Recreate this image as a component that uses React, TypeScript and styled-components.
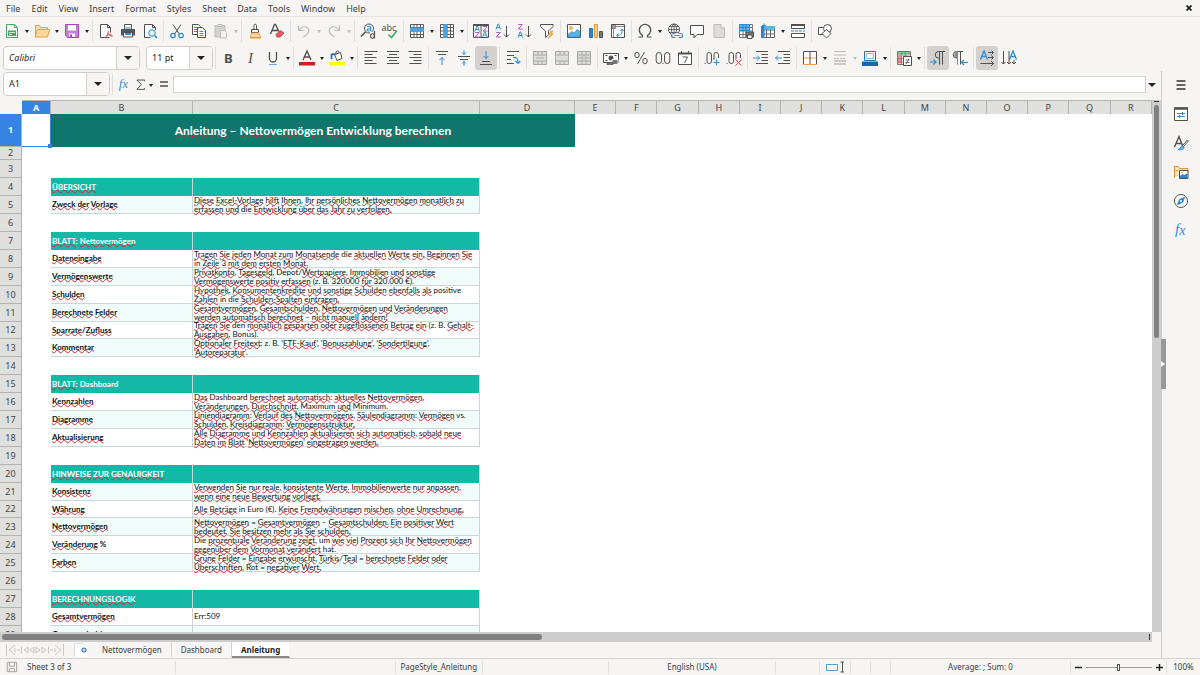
import React, { Fragment, ReactNode } from "react";
import styled, { createGlobalStyle, css } from "styled-components";

const c = {
  chrome: "#f6f5f4",
  line: "#d5d3d0",
  ink: "#3d3d3d",
  icon: "#505050",
  blue: "#2f8fd3",
  accent: "#3584e4",
  faint: "#bcbcba",
  teal: "#14b8a6",
  tealDark: "#0f766e",
  tint: "#f0fdfa",
  header: "#dfdfdd",
  headerLine: "#b3b3b0",
};

const ui = `"Noto Sans", "Open Sans", sans-serif`;
const cellFont = `Lato, "Open Sans", sans-serif`;

const Global = createGlobalStyle`
  *, *::before, *::after { box-sizing: border-box; }
  html, body { margin: 0; }
  body { background: ${c.chrome}; color: ${c.ink}; font: 9px/12px ${ui}; overflow: hidden; }
  button, input { font: inherit; color: inherit; margin: 0; padding: 0; border: 0; background: none; }
  svg { display: block; flex: none; }
`;

/* ---------- icons ---------- */

const K = c.icon;
const B = c.blue;
const F = c.faint;
const P = "#b357c4";

const lines = (rows: [number, number, number][], stroke = K) => (
  <path d={rows.map(([x, y, w]) => `M${x} ${y}h${w}`).join("")} stroke={stroke} />
);
const tableGrid = (stroke: string) => (
  <path d="M1.5 1.5h13v13h-13zM1.5 4.5h13M1.5 8h13M1.5 11.5h13M5 1.5v13M8 1.5v13M11.5 1.5v13" fill="#fff" stroke={stroke} />
);
const letter = (ch: string, x: number, y: number, size: number, fill: string, bold = false) => (
  <text x={x} y={y} fontSize={size} fill={fill} stroke="none" fontFamily={ui} fontWeight={bold ? 700 : 400}>
    {ch}
  </text>
);
/* small sort marks: a peak with a bar, and a zigzag */
const peak = (x: number, y: number) => (
  <path d={`M${x} ${y + 5.5}l2-5.500h.6l2 5.500M${x + 0.8} ${y + 3.5}h3`} stroke={B} />
);
const zigzag = (x: number, y: number) => <path d={`M${x} ${y + 0.5}h4l-4 4.500h4.500`} stroke={P} />;
const fxGlyph = (
  <text x={2} y={12} fontSize={15} fill={B} stroke="none" fontStyle="italic" fontFamily={`"Liberation Serif", serif`}>
    f<tspan fontSize={14} dy={1}>x</tspan>
  </text>
);

const icons: Record<string, ReactNode> = {
  new: (
    <>
      <path d="M2.5 1.5h8l3 3v10h-11z" fill="#fff" stroke="#3fa866" />
      <path d="M10.5 1.5v3h3" stroke="#3fa866" />
      <path d="M4 7.5h8V13H4z" fill="#3fa866" stroke="none" />
      <path d="M5 9.5h6M5 11.5h3" stroke="#fff" strokeWidth={0.8} />
    </>
  ),
  open: (
    <>
      <path d="M1.5 13.5v-11h4l1 2h7v2" fill="#fbe0b0" stroke="#e2a04a" />
      <path d="M1 14l2.5-7.5H15.7L13.5 14z" fill="#fcd79a" stroke="#e2a04a" />
    </>
  ),
  save: (
    <>
      <path d="M1.5 1.5h13v13h-11l-2-2z" fill="#c583d2" stroke="#a646b8" />
      <path d="M4 2h8v5.5H4zM5 10.5h6V14H5z" fill="#fff" stroke="none" />
      <path d="M6 11.5h2V14H6z" fill="#a646b8" stroke="none" />
    </>
  ),
  pdf: (
    <>
      <path d="M11.5 14.5h-9v-13h7l3 3v5" fill="#fff" stroke={K} />
      <path d="M9.5 1.5v3h3" stroke={K} />
      <path d="M7.5 14c2-1.5 3-3.5 2.7-6M10 10c.8 2 2.400 3 4.700 3.300M8.200 13c1.500-1 3.500-1.600 6-1" stroke="#e04a4a" />
    </>
  ),
  print: (
    <>
      <path d="M4.5 6V1.500h7V6" fill="#fff" stroke={K} />
      <path d="M1 6h14v6.500H1z" fill="#555" stroke="none" />
      <path d="M3.5 9.5h9V14h-9z" fill="#fff" stroke={K} />
      <path d="M4 5h8" stroke={B} />
      <path d="M5 11h6" stroke={B} strokeWidth={2} />
    </>
  ),
  preview: (
    <>
      <path d="M13.5 7V4.500l-3-3h-8v13h6" fill="#fff" stroke={K} />
      <path d="M10.5 1.5v3h3" stroke={K} />
      <circle cx={10} cy={10} r={3.3} fill="#dff0fa" stroke={B} />
      <path d="M12.3 12.3L15 15" stroke={B} strokeWidth={1.5} />
    </>
  ),
  cut: (
    <>
      <path d="M4 1.5l6.300 9.500M12 1.5L5.700 11" stroke={K} />
      <circle cx={4} cy={12.5} r={2.2} stroke={B} strokeWidth={1.3} />
      <circle cx={12} cy={12.5} r={2.2} stroke={B} strokeWidth={1.3} />
    </>
  ),
  copy: (
    <>
      <path d="M1.5 1.5h6l2 2v8h-8z" fill="#fff" stroke={K} />
      <path d="M3 4.5h4M3 6.5h4M3 8.5h4" stroke={B} />
      <path d="M6.5 4.5h5l3 3v7h-8z" fill="#fff" stroke={K} />
      <path d="M8.5 8.5h4M8.5 10.5h4M8.5 12.5h4" stroke={B} />
    </>
  ),
  paste: (
    <>
      <path d="M2 2.5h10V14H2z" fill="#d4d4d2" stroke={F} />
      <path d="M5 1.5h4v2H5z" fill="#eee" stroke={F} />
      <path d="M7.5 7.5h4l2 2V15h-6z" fill="#f3f3f2" stroke={F} />
    </>
  ),
  brush: (
    <>
      <path d="M7 6.5v-4a1 1 0 0 1 2.500 0v4" fill="#fff" stroke={K} />
      <path d="M4.5 6.5h7v3h-7z" fill="#fff" stroke={K} />
      <path d="M4.5 10l-1 4.500h10L12 10z" fill="#fbd9a4" stroke="#e2a04a" />
      <path d="M3 15h11" stroke="#e8932c" />
    </>
  ),
  clear: (
    <>
      <path d="M1.5 11L5.500 1.500h1L10 9M3 7.500h6" stroke={K} strokeWidth={1.3} />
      <path d="M7 12.5l4-4 4 2.500-4 4H8z" fill="#e35d66" stroke="#d8434e" transform="translate(0 -1)" />
    </>
  ),
  undo: <path d="M2.5 2.500v5h5M2.800 7.200C5 4 9 2.500 11.700 5c2.500 2.500 1 6-4.200 9" stroke={F} strokeWidth={1.2} />,
  redo: <path d="M13.5 2.500v5h-5M13.200 7.200C11 4 7 2.500 4.300 5c-2.500 2.500-1 6 4.200 9" stroke={F} strokeWidth={1.2} />,
  find: (
    <>
      <circle cx={9} cy={5.5} r={4.5} fill="#fff" stroke={K} />
      <path d="M5.7 8.7L1 13.5" stroke={K} strokeWidth={1.6} />
      <path d="M7.2 3.800c2-1 3.500-.5 3.500 1V8M10.700 5.500c-2.500 0-3.700.4-3.700 1.500s2.500 1.500 3.700 0" stroke={B} strokeWidth={1.2} />
      <path d="M10 9h6v7h-6z" fill={c.chrome} stroke="none" />
      <path d="M14.5 8v7.500" stroke={K} strokeWidth={1.2} />
      <ellipse cx={12.5} cy={13} rx={1.9} ry={2.2} stroke={K} strokeWidth={1.1} />
    </>
  ),
  spell: (
    <>
      {letter("abc", -0.5, 8, 9, K)}
      <path d="M6.5 11.5l3 3 5.500-7" stroke="#3fa866" strokeWidth={1.5} />
    </>
  ),
  row: (
    <>
      {tableGrid("#5a5a5a")}
      <path d="M1 4.5h14v4H1z" fill="#4aa3e0" stroke="none" />
    </>
  ),
  column: (
    <>
      {tableGrid("#5a5a5a")}
      <path d="M4.5 1h4v14h-4z" fill="#4aa3e0" stroke="none" />
    </>
  ),
  sort: (
    <>
      <path d="M.5 1.500h15v13H.500zM8 2v13" fill="#fff" stroke={K} />
      <path d="M.5 2h15" stroke={K} strokeWidth={2} />
      {peak(1.9, 3)}
      {zigzag(2.2, 9)}
      {zigzag(10, 3)}
      {peak(9.6, 8.6)}
    </>
  ),
  asc: (
    <>
      {peak(1, 1)}
      {zigzag(1.3, 9)}
      <path d="M11.5 3v11M9 11.5l2.500 2.500 2.500-2.500" stroke={K} />
    </>
  ),
  desc: (
    <>
      {zigzag(1.3, 1)}
      {peak(1, 9)}
      <path d="M11.5 3v11M9 11.5l2.500 2.500 2.500-2.500" stroke={K} />
    </>
  ),
  filter: (
    <>
      <path d="M1.5 1.5H14v2L9.500 8v4l-3 2.500V8l-5-4.500z" fill="#fff" stroke={K} />
      <path d="M12 8l-3 4h2.500l-2 3.500 5-5H12L14 8z" fill="#f5b75e" stroke="#e8932c" strokeWidth={0.6} />
    </>
  ),
  image: (
    <>
      <path d="M1.5 1.5h13v13h-13z" fill="#fff" stroke={K} />
      <circle cx={5} cy={5} r={1.5} fill="#f8c276" stroke="#e8932c" strokeWidth={0.7} />
      <path d="M2 11.5l4-3 2 1.500 3.500-3.500L14 9v5H2z" fill="#5fb0e6" stroke={B} strokeWidth={0.8} />
    </>
  ),
  chart: (
    <>
      <path d="M1.5 5.5h3v9h-3z" fill="#2e86d1" stroke="#2274ba" />
      <path d="M6.5 1.5h3v13h-3z" fill="#fbd18c" stroke="#e8932c" />
      <path d="M11.5 8.5h3v6h-3z" fill="#777" stroke={K} />
    </>
  ),
  pivot: (
    <>
      <path d="M1.5 1.5h13v13h-13z" fill="#fff" stroke={K} />
      <path d="M5.5 2v3.500H2M5.500 3.500H14M3.500 5.500V14" stroke="#888" />
      <path d="M2 2h3v3H2z" fill="#999" stroke="none" />
      <path d="M7 12.5c3.500 0 5.500-2 5-6M10.500 8L12 6l2 1.700M8.500 10.500l-2 2 2 1.500" stroke={B} />
    </>
  ),
  omega: <path d="M1.5 14h4v-1.500C3.500 11 2.300 9.500 2.300 7a5.700 5.700 0 0 1 11.400 0c0 2.500-1.200 4-3.200 5.500V14h4" stroke={K} strokeWidth={1.2} />,
  link: (
    <>
      <circle cx={7} cy={6.5} r={5.5} fill="#fff" stroke={K} />
      <path d="M1.5 6.500h11M7 1v11M2.500 3.500h9M2.500 9.500h9M7 1C3.500 4 3.500 9 7 12M7 1c3.500 3 3.500 8 0 11" stroke={K} strokeWidth={0.8} />
      <path d="M4 10h12v5H4z" fill={c.chrome} stroke="none" />
      <path d="M8.5 10.500h-2a2 2 0 0 0 0 4h2M11.500 10.500h2a2 2 0 0 1 0 4h-2M7.500 12.500h5" stroke={B} strokeWidth={1.2} />
    </>
  ),
  comment: <path d="M1.5 2.500h13v9H8L5 15v-3.500H1.500z" fill="#fff" stroke={K} />,
  page: (
    <>
      <path d="M3 1.500h7L13.500 5v9.500H3z" fill="#dcdcda" stroke={F} />
      <path d="M10 1.500V5h3.500" stroke={F} fill="#fff" />
    </>
  ),
  printArea: (
    <>
      {tableGrid("#777")}
      <path d="M1.5 1.5h10v6h-10z" fill="#5fb2e8" stroke={B} />
      <path d="M1.5 4.500h10M5 1.500v6M8 1.500v6" stroke="#2274ba" strokeWidth={0.7} />
      <path d="M8 9h7.500v5H8z" fill="#777" stroke={K} />
      <path d="M9.500 12H14v3.500H9.500z" fill="#fff" stroke={K} />
    </>
  ),
  freeze: (
    <>
      <path d="M2.5 3.500h12v11h-12zM2.500 7h12M2.500 11h12M6.500 3.500v11M10.500 3.500v11" fill="#fff" stroke="#666" />
      <path d="M1 3h3.500v12H1z" fill="#2e86d1" stroke="none" />
      <path d="M4 3h11v3H4z" fill="#5fb2e8" stroke="none" />
      <path d="M4 .5v4M2 2.500h4" stroke={B} />
    </>
  ),
  split: (
    <>
      <path d="M1.5 1.5h13v4h-13zM1.5 10.500h13v4h-13z" fill="#fff" stroke={K} />
      <path d="M1 2h14" stroke={K} strokeWidth={2} />
      <path d="M1 8h14" stroke={B} strokeDasharray="3 1" />
    </>
  ),
  shapes: (
    <>
      <path d="M1.5 4.5h7v7h-7z" fill="#fff" stroke={K} />
      <circle cx={10.5} cy={5.5} r={4} fill="#fff" stroke={K} />
      <path d="M9.5 6.500l4.500 4-4.500 4.500L5 10.500z" fill="#fff" stroke={K} />
    </>
  ),
  bold: letter("B", 3, 12.5, 13, K, true),
  italic: (
    <text x={5} y={12.5} fontSize={15} fill={K} stroke="none" fontStyle="italic" fontFamily={`"Liberation Serif", serif`}>
      I
    </text>
  ),
  underline: (
    <>
      <path d="M4.5 2v6.500a3.500 3.500 0 0 0 7 0V2" stroke={K} strokeWidth={1.3} />
      <path d="M4 14.500h8" stroke="#6fa8dc" />
    </>
  ),
  fontColor: (
    <>
      <path d="M4 10l4-9 4 9M5.500 7h5" stroke={K} strokeWidth={1.4} />
      <path d="M0 12h16v3.500H0z" fill="#c9211e" stroke="none" />
    </>
  ),
  highlight: (
    <>
      <path d="M5.5 4.5l6-2L13 8.500l-5 2z" fill="#fff" stroke={K} />
      <path d="M7 5V2.500a1.500 1.500 0 0 1 3 0" stroke={K} />
      <path d="M2.5 9V4.500L6 3.800" stroke="#2274ba" strokeWidth={1.8} />
      <path d="M0 12h16v3.500H0z" fill="#ff0" stroke="none" />
    </>
  ),
  left: lines([[1.5, 1.5, 13], [1.5, 4.5, 8], [1.5, 7.5, 12], [1.5, 10.5, 8], [1.5, 13.5, 12]]),
  center: lines([[2, 1.5, 12], [4, 4.5, 8], [2, 7.5, 12], [4, 10.5, 8], [2, 13.5, 12]]),
  right: lines([[1.5, 1.5, 13], [6.5, 4.5, 8], [2.5, 7.5, 12], [6.5, 10.5, 8], [2.5, 13.5, 12]]),
  top: (
    <>
      {lines([[2, 1.5, 12], [4, 4.5, 8]])}
      <path d="M8 15V7.500M5.500 10L8 7.500l2.500 2.500" stroke={B} />
    </>
  ),
  middle: (
    <>
      {lines([[2, 6.5, 12], [4, 9.5, 8]])}
      <path d="M8 0v4.500M6 2.500l2 2 2-2M8 16v-4.500M6 13.500l2-2 2 2" stroke={B} />
    </>
  ),
  bottom: (
    <>
      {lines([[4, 11.5, 8], [2, 14.5, 12]])}
      <path d="M8 1v7.500M5.500 6L8 8.500 10.500 6" stroke={B} />
    </>
  ),
  wrap: (
    <>
      {lines([[2, 1.5, 12], [2, 5.5, 7], [2, 9.5, 4], [2, 13.5, 7]])}
      <path d="M8 7.500c3.500-.5 5 1 5 5M10.500 11l2.500 2.500 2.300-2.500" stroke={B} strokeWidth={1.2} />
    </>
  ),
  merge: (
    <>
      <path d="M1.5 1.5h13v13h-13z" fill="#dededc" stroke="#aaa" />
      <path d="M2 5h12M2 11h12M6 2v3M10 2v3M6 11v3M10 11v3M4 8h8" stroke="#aaa" />
    </>
  ),
  mergeBox: (
    <>
      <path d="M1.5 1.5h13v13h-13z" fill="#dededc" stroke="#aaa" />
      <path d="M2 5h12M2 11h12M6 2v3M10 2v3M6 11v3M10 11v3" stroke="#aaa" />
    </>
  ),
  unmerge: (
    <>
      <path d="M1.5 1.5h13v13h-13z" fill="#dededc" stroke="#aaa" />
      <path d="M2 5h12M2 11h12M6 2v12M10 2v12M2 8h12" stroke="#aaa" />
    </>
  ),
  currency: (
    <>
      <path d="M.5 3.500h15v9H.500z" fill="#fff" stroke={K} />
      <circle cx={8} cy={8} r={2.5} fill={K} stroke="none" />
      <path d="M2.5 5.500h2M11.500 5.500h2M2.500 10.500h2" stroke={K} />
      <path d="M9 9.500h6v5H9z" fill="#777" stroke={c.chrome} />
      <path d="M4 12.500h6v2H4z" fill="#777" stroke={K} strokeWidth={0.7} />
    </>
  ),
  percent: (
    <>
      <ellipse cx={4} cy={5} rx={2.2} ry={2.8} stroke={K} />
      <ellipse cx={12} cy={11} rx={2.2} ry={2.8} stroke={K} />
      <path d="M11.5 2L4.500 14" stroke={K} />
    </>
  ),
  number: (
    <>
      <rect x={1.2} y={2.5} width={5.3} height={11} rx={2.65} stroke={K} />
      <rect x={9.5} y={2.5} width={5.3} height={11} rx={2.65} stroke={K} />
      <path d="M7.5 13.500h1" stroke={K} />
    </>
  ),
  date: (
    <>
      <path d="M1.5 3.500h13v11h-13z" fill="#fff" stroke={K} />
      <path d="M1 3.500h14" stroke={K} strokeWidth={2} />
      <path d="M4.5 1v2M11.500 1v2" stroke={K} />
      <path d="M5.5 7h5L7.500 13" stroke={K} />
    </>
  ),
  addDecimal: (
    <>
      <path d="M.5 13.500h1" stroke={K} />
      <rect x={3} y={2.5} width={4.5} height={11} rx={2.25} stroke={K} />
      <path d="M10 10V4.700a2.200 2.200 0 0 1 4.500 0V8" stroke={K} />
      <path d="M12.5 9.500v6M9.500 12.500h6" stroke={B} />
    </>
  ),
  delDecimal: (
    <>
      <path d="M.5 13.500h1" stroke={K} />
      <rect x={3} y={2.5} width={4.5} height={11} rx={2.25} stroke={K} />
      <path d="M10 9V4.700a2.200 2.200 0 0 1 4.500 0V8" stroke={K} />
      <path d="M9.5 9.500l6 6M15.500 9.500l-6 6" stroke="#e04a4a" />
    </>
  ),
  indent: (
    <>
      {lines([[3, 1.5, 12], [8.5, 4.5, 6.5], [8.5, 7.5, 6.5], [8.5, 10.5, 6.5], [3, 13.5, 12]])}
      <path d="M0 8h6.500M4 5.500L6.500 8 4 10.500" stroke={B} />
    </>
  ),
  outdent: (
    <>
      {lines([[3, 1.5, 12], [8.5, 4.5, 6.5], [8.5, 7.5, 6.5], [8.5, 10.5, 6.5], [3, 13.5, 12]])}
      <path d="M.5 8H7M3 5.500L.500 8 3 10.500" stroke={B} />
    </>
  ),
  borders: (
    <>
      <path d="M1.5 1.5h13v13h-13z" fill="#fff" stroke={K} />
      <path d="M2 8h12M1 14.500h14" stroke="#eba04a" />
      <path d="M8 2v12" stroke={K} />
    </>
  ),
  lineStyle: (
    <>
      {lines([[2, 1.5, 12], [2, 5, 12]], F)}
      <path d="M2 8.500h12" stroke={F} strokeDasharray="2 1" />
      <path d="M2 11h12M2 14h12" stroke={F} strokeWidth={1.5} />
    </>
  ),
  lineColor: (
    <>
      <path d="M2.5 1.5h11v9h-11z" fill="#fff" stroke="#2a72b0" />
      <path d="M4.5 3.500h7v5h-7z" stroke="#9bb" />
      <path d="M0 11.500h16V16H0z" fill="#2165a8" stroke="none" />
    </>
  ),
  conditional: (
    <>
      <path d="M1.5 1.5h13v13h-13z" fill="#fff" stroke="#777" />
      <path d="M2 2h12v2.500H2z" fill="#79c58f" stroke="none" />
      <path d="M2 5.500h4v8H2zM7 5.500h4v3H7z" fill="#f0888c" stroke="none" />
      <path d="M1.5 5h13M1.500 8.500h13M1.500 12h13M5.500 2v12.500M9.500 2v12.500" stroke="#777" strokeWidth={0.7} />
      <path d="M7.5 6.500h8v9h-8z" fill="#fff" stroke={K} />
      <path d="M9.5 10h4M9.500 12.500h4M13 8.500L10 14" stroke={K} strokeWidth={0.8} />
    </>
  ),
  ltr: (
    <>
      <path d="M9.5 8h-1a3.200 3.200 0 0 1 0-6.500H15M9.500 1.500v13M12.500 1.500v13" stroke={K} />
      <path d="M0 12h6M3.500 9.500L6 12l-2.500 2.500" stroke={B} strokeWidth={1.2} />
    </>
  ),
  rtl: (
    <>
      <path d="M5.5 8h-1a3.200 3.200 0 0 1 0-6.500H11M8.500 1.500v13" stroke={K} />
      <path d="M5.5 2v6A3.200 3.200 0 0 1 5 1.800zM5.500 1.500v13" fill="#888" stroke="#888" />
      <path d="M9.5 12.500H16M12 10l-2.500 2.500L12 15" stroke={B} strokeWidth={1.2} />
    </>
  ),
  horizontal: (
    <>
      <path d="M1.5 9.500L5 1l3.500 8.500M2.800 6.500h4.500" stroke={B} strokeWidth={1.4} />
      <path d="M9 2.500h5M9 7.500h5M12.500 .5l2 2-2 2M12.500 5.500l2 2-2 2M1.500 13.500h13M12 11l2.500 2.500L12 16" stroke={K} />
    </>
  ),
  vertical: (
    <>
      <path d="M8.5 9.500L12 1l3.500 8.500M9.800 6.500h4.500" stroke={B} strokeWidth={1.4} />
      <path d="M2.5 1v13M.5 12l2 2 2-2M8 1v13M6 12l2 2 2-2M13 10v4M11 12l2 2 2-2" stroke={K} />
    </>
  ),
  fx: fxGlyph,
  sum: <path d="M13 4V2.500H3.500L9 8l-5.500 6H13v-1.500" stroke={K} strokeWidth={1.2} />,
  equals: <path d="M4 6h8M4 10h8" stroke={K} strokeWidth={1.5} />,
  menu: <path d="M3.5 4h9M3.500 8h9M3.500 12h9" stroke="#333" strokeWidth={1.5} />,
  properties: (
    <>
      <path d="M1.5 2h13v12.500h-13z" fill="#fff" stroke={K} />
      <path d="M1 2.500h14" stroke={K} strokeWidth={2.5} />
      <path d="M4 7.500h8M4 10.500h8M9.500 6v3M6.500 9v3" stroke={B} />
    </>
  ),
  styles: (
    <>
      <path d="M1.5 12L6 1.500 10 12M3 8.500h6" stroke={K} strokeWidth={1.4} />
      <path d="M15.5 6l-5 5.500-2 1 1-2 5-5.500z" fill="#fff" stroke={K} />
      <path d="M9.5 11c-2 0-2 3-4.500 3.500 3 .8 6.500 0 6-2.500z" fill="#5fb0e6" stroke={B} />
    </>
  ),
  gallery: (
    <>
      <path d="M1.5 13.500v-11h4l1 2H15v3" fill="#fce0b4" stroke="#e2963a" />
      <path d="M1.5 13.500v-7H5" stroke="#e2963a" />
      <path d="M6.5 6.500H15v8H6.500z" fill="#fff" stroke={K} />
      <path d="M7 12l2.500-2 2 1 3-2v5H7z" fill="#2e86d1" stroke="none" />
      <circle cx={9} cy={8.5} r={0.8} fill="#e2963a" stroke="none" />
    </>
  ),
  navigator: (
    <>
      <circle cx={8} cy={8} r={6.5} fill="#fff" stroke={K} />
      <path d="M11.5 4.500l-2 5-5 2 2-5z" fill="#2e86d1" stroke={B} />
      <circle cx={8} cy={8} r={1} fill="#fff" stroke="none" />
    </>
  ),
  disk: <path d="M2.5 2.500h11v11h-11zM5 3v4h6V3M5 13.500V10h6v3.500" stroke="#999" />,
};

function Icon({ name, size = 16 }: { name: string; size?: number }) {
  return (
    <svg width={size} height={size} viewBox="0 0 16 16" fill="none" overflow="visible" aria-hidden="true">
      {icons[name]}
    </svg>
  );
}

const Caret = ({ faded = false, large = false }: { faded?: boolean; large?: boolean }) => (
  <svg width={large ? 8 : 4} height={large ? 4 : 3} viewBox="0 0 8 4" preserveAspectRatio="none" aria-hidden="true">
    <path d="M0 0h8L4 4z" fill={faded ? "#bbb" : "#222"} />
  </svg>
);

/* ---------- window frame ---------- */

const Window = styled.div`
  display: flex;
  flex-direction: column;
  height: 100vh;
`;

const MenuBar = styled.nav`
  display: flex;
  align-items: center;
  gap: 11px;
  height: 17px;
  padding: 0 8px 0 6px;
  border-bottom: 1px solid #e6e4e2;
`;

const MenuItem = styled.button`
  line-height: 15px;
`;

const CloseButton = styled.button`
  margin-left: auto;
`;

const Toolbar = styled.div<{ $inset?: number }>`
  display: flex;
  align-items: center;
  height: 27px;
  padding-left: ${(p) => p.$inset ?? 1}px;
`;

const ToolButton = styled.button<{ $active?: boolean }>`
  display: flex;
  align-items: center;
  justify-content: center;
  width: 22px;
  height: 24px;
  border-radius: 3px;
  background: ${(p) => (p.$active ? "#d3d0cd" : "transparent")};
`;

const DropButton = styled.button`
  display: flex;
  align-items: center;
  justify-content: center;
  width: 8px;
  height: 24px;
  padding-top: 2px;
`;

const Divider = styled.span`
  width: 1px;
  height: 22px;
  margin: 0 2px;
  background: #e2e0dd;
  ${DropButton} + & {
    margin-left: 1px;
  }
`;

const Combo = styled.div<{ $width: number }>`
  display: flex;
  width: ${(p) => p.$width}px;
  height: 24px;
  border: 1px solid #d0cdca;
  border-radius: 4px;
  background: #fff;
  overflow: hidden;
  & + & {
    margin-left: 6px;
  }
`;

const ComboInput = styled.input<{ $italic?: boolean }>`
  flex: 1;
  min-width: 0;
  padding-left: 5px;
  font-style: ${(p) => (p.$italic ? "italic" : "normal")};
  color: #1f1f1f;
  outline: none;
`;

const ComboButton = styled.button`
  display: flex;
  align-items: center;
  justify-content: center;
  width: 23px;
  border-left: 1px solid #d5d3d0;
  background: #f6f5f4;
`;

/* ---------- work area ---------- */

const Work = styled.div`
  display: flex;
  flex: 1;
  min-height: 0;
`;

const Editor = styled.main`
  display: flex;
  flex-direction: column;
  flex: 1;
  min-width: 0;
`;

const FormulaBar = styled.div`
  display: flex;
  align-items: center;
  height: 29px;
  padding: 0 5px 3px 3px;
`;

const FormulaIcon = styled.button<{ $width: number }>`
  display: flex;
  align-items: center;
  justify-content: center;
  width: ${(p) => p.$width}px;
  height: 22px;
`;

const FormulaInput = styled.input`
  flex: 1;
  height: 17px;
  margin-right: 2px;
  border: 1px solid #d5d3d0;
  background: #fff;
`;

const SheetArea = styled.div`
  display: flex;
  flex: 1;
  min-height: 0;
`;

const Viewport = styled.div`
  flex: 1;
  min-width: 0;
  overflow: hidden;
  background: #fff;
`;

const Grid = styled.table`
  width: 100%;
  table-layout: fixed;
  border-collapse: separate;
  border-spacing: 0;
`;

const Col = styled.col<{ $width?: number }>`
  ${(p) => p.$width && `width: ${p.$width}px;`}
`;

const headStyle = css<{ $selected?: boolean }>`
  padding: 0;
  font-size: 9px;
  line-height: 12px;
  font-weight: ${(p) => (p.$selected ? 700 : 400)};
  color: ${(p) => (p.$selected ? "#fff" : "#444")};
  background: ${(p) => (p.$selected ? c.accent : c.header)};
  text-align: center;
  vertical-align: middle;
`;

const Corner = styled.td`
  padding: 0;
  height: 14px;
  background: ${c.chrome};
`;

const ColumnHead = styled.th<{ $selected?: boolean }>`
  ${headStyle}
  border-top: 1px solid ${c.headerLine};
  border-right: 1px solid ${c.headerLine};
`;

const RowHead = styled.th<{ $selected?: boolean }>`
  ${headStyle}
  border-right: 1px solid ${c.headerLine};
  border-bottom: 1px solid ${c.headerLine};
`;

const Row = styled.tr<{ $height: number }>`
  height: ${(p) => p.$height}px;
`;

const Blank = styled.td`
  padding: 0;
`;

const ActiveCell = styled.td`
  position: relative;
  padding: 0;
  border-right: 1px solid ${c.accent};
  border-bottom: 1px solid ${c.accent};
  &::after {
    content: "";
    position: absolute;
    right: -2px;
    bottom: -2px;
    width: 4px;
    height: 4px;
    background: ${c.accent};
  }
`;

const TitleCell = styled.td`
  padding: 0;
  background: ${c.tealDark};
  color: #fff;
  font: 700 12px/16px ${cellFont};
  text-align: center;
`;

const SectionCell = styled.td`
  padding: 0 1px;
  border-right: 1px solid #bfdcd8;
  background: ${c.teal};
  color: #fff;
  font: 700 8px/9px ${cellFont};
  white-space: nowrap;
`;

const DataCell = styled.td<{ $tinted: boolean; $strong?: boolean }>`
  padding: 0 1px;
  border-right: 1px solid #ccd6d5;
  border-bottom: 1px solid #ccd6d5;
  background: ${(p) => (p.$tinted ? c.tint : "#fff")};
  color: #111;
  font: ${(p) => (p.$strong ? 700 : 400)} 8px/9px ${cellFont};
  white-space: nowrap;
`;

const CellText = styled.div<{ $height: number }>`
  display: flex;
  flex-direction: column;
  justify-content: center;
  height: ${(p) => p.$height - 1}px;
`;

const Misspelt = styled.span`
  text-decoration: underline wavy #d9262c 1px;
  text-decoration-skip-ink: none;
  text-underline-offset: -1px;
`;

/* ---------- scroll bars, tabs, status ---------- */

const VScroll = styled.div`
  width: 9px;
  padding: 1px 2px;
  background: #cdcdcd;
`;

const VSplit = styled.div`
  height: 1px;
  margin-bottom: 3px;
  background: #333;
`;

const VThumb = styled.div`
  height: 44%;
  border-radius: 3px;
  background: #808080;
`;

const HScroll = styled.div`
  display: flex;
  align-items: center;
  justify-content: space-between;
  height: 10px;
  margin-right: 9px;
  padding: 0 2px;
  background: #cdcdcd;
`;

const HThumb = styled.div`
  width: 47%;
  height: 6px;
  border-radius: 3px;
  background: #808080;
`;

const HSplit = styled.div`
  width: 1px;
  height: 6px;
  background: #333;
`;

const TabBar = styled.div`
  display: flex;
  align-items: center;
  height: 16px;
  padding-left: 5px;
  font-size: 8px;
`;

const TabNav = styled.button`
  width: 15px;
`;

const AddTab = styled.button`
  width: 13px;
  height: 14px;
  margin: 0 6px 0 9px;
  background: #fff;
`;

const Tab = styled.button<{ $active?: boolean }>`
  height: 16px;
  padding: 1px 9px 0;
  border-right: 1px solid ${(p) => (p.$active ? "transparent" : c.line)};
  border-bottom: 2px solid ${(p) => (p.$active ? "#8a8a88" : "transparent")};
  background: ${(p) => (p.$active ? "#fff" : "transparent")};
  background-clip: padding-box;
  font-weight: ${(p) => (p.$active ? 700 : 400)};
  color: ${(p) => (p.$active ? "#222" : c.ink)};
`;

const Sidebar = styled.aside`
  position: relative;
  display: flex;
  flex-direction: column;
  align-items: center;
  gap: 7px;
  width: 39px;
  padding-top: 3px;
  border-left: 1px solid #d0cecb;
`;

const SideButton = styled.button`
  display: flex;
  align-items: center;
  justify-content: center;
  width: 22px;
  height: 22px;
`;

const SidebarHandle = styled.button`
  position: absolute;
  left: -1px;
  top: calc(50% - 26px);
  display: flex;
  align-items: center;
  width: 5px;
  height: 50px;
  background: #999;
`;

const StatusBar = styled.footer`
  display: flex;
  align-items: center;
  height: 17px;
  border-top: 1px solid ${c.line};
  font-size: 8px;
`;

const Status = styled.div<{ $width?: number; $grow?: number; $align?: string }>`
  display: flex;
  align-items: center;
  justify-content: ${(p) => p.$align ?? "center"};
  gap: 4px;
  width: ${(p) => (p.$width ? `${p.$width}px` : "auto")};
  flex: ${(p) => (p.$grow ? `${p.$grow} 1 0` : "none")};
  height: 13px;
  border-right: 1px solid #e0deda;
  white-space: nowrap;
`;

const Zoom = styled.input`
  appearance: none;
  width: 66px;
  height: 10px;
  outline: none;
  &::-webkit-slider-runnable-track {
    height: 1px;
    background: #999;
  }
  &::-webkit-slider-thumb {
    appearance: none;
    width: 3px;
    height: 7px;
    margin-top: -3px;
    border: 1px solid #555;
    background: #fff;
  }
`;

const ZoomValue = styled.output`
  width: 33px;
  text-align: center;
`;

/* ---------- data ---------- */

const menus = ["File", "Edit", "View", "Insert", "Format", "Styles", "Sheet", "Data", "Tools", "Window", "Help"];

/* "|" is a divider, "v" and "w" a drop-down arrow (enabled, disabled), "*" marks a pressed button */
const standard =
  "new v open v save v | pdf print preview | cut copy paste w | brush clear | undo w redo w | find spell | row v column v | sort asc desc filter | image chart pivot | omega v link comment page | printArea freeze v split | shapes";
const formatting =
  "| bold italic underline v | fontColor v highlight v | left center right | top middle bottom* | wrap | merge mergeBox unmerge | currency v percent number date | addDecimal delDecimal | indent outdent | borders v lineStyle w lineColor v | conditional v | ltr* rtl | horizontal* vertical";

/* words the spell checker accepts */
const known = new Set("die in den depot bonus dashboard maximum minimum vs um hat rot euro positive err".split(" "));

type SheetRow = { n: number; h: number; section?: string; label?: string; text?: string[] };

const rows: SheetRow[] = [
  { n: 2, h: 13 },
  { n: 3, h: 18 },
  { n: 4, h: 18, section: "ÜBERSICHT" },
  {
    n: 5, h: 18, label: "Zweck der Vorlage",
    text: ["Diese Excel-Vorlage hilft Ihnen, Ihr persönliches Nettovermögen monatlich zu", "erfassen und die Entwicklung über das Jahr zu verfolgen."],
  },
  { n: 6, h: 18 },
  { n: 7, h: 18, section: "BLATT: Nettovermögen" },
  {
    n: 8, h: 18, label: "Dateneingabe",
    text: ["Tragen Sie jeden Monat zum Monatsende die aktuellen Werte ein. Beginnen Sie", "in Zeile 3 mit dem ersten Monat."],
  },
  {
    n: 9, h: 18, label: "Vermögenswerte",
    text: ["Privatkonto, Tagesgeld, Depot/Wertpapiere, Immobilien und sonstige", "Vermögenswerte positiv erfassen (z. B. 320000 für 320.000 €)."],
  },
  {
    n: 10, h: 18, label: "Schulden",
    text: ["Hypothek, Konsumentenkredite und sonstige Schulden ebenfalls als positive", "Zahlen in die Schulden-Spalten eintragen."],
  },
  {
    n: 11, h: 18, label: "Berechnete Felder",
    text: ["Gesamtvermögen, Gesamtschulden, Nettovermögen und Veränderungen", "werden automatisch berechnet – nicht manuell ändern!"],
  },
  {
    n: 12, h: 17, label: "Sparrate/Zufluss",
    text: ["Tragen Sie den monatlich gesparten oder zugeflossenen Betrag ein (z. B. Gehalt-", "Ausgaben, Bonus)."],
  },
  {
    n: 13, h: 18, label: "Kommentar",
    text: ["Optionaler Freitext: z. B. 'ETF-Kauf', 'Bonuszahlung', 'Sondertilgung',", "'Autoreparatur'."],
  },
  { n: 14, h: 18 },
  { n: 15, h: 18, section: "BLATT: Dashboard" },
  {
    n: 16, h: 18, label: "Kennzahlen",
    text: ["Das Dashboard berechnet automatisch: aktuelles Nettovermögen,", "Veränderungen, Durchschnitt, Maximum und Minimum."],
  },
  {
    n: 17, h: 18, label: "Diagramme",
    text: ["Liniendiagramm: Verlauf des Nettovermögens, Säulendiagramm: Vermögen vs.", "Schulden, Kreisdiagramm: Vermögensstruktur."],
  },
  {
    n: 18, h: 18, label: "Aktualisierung",
    text: ["Alle Diagramme und Kennzahlen aktualisieren sich automatisch, sobald neue", "Daten im Blatt 'Nettovermögen' eingetragen werden."],
  },
  { n: 19, h: 18 },
  { n: 20, h: 18, section: "HINWEISE ZUR GENAUIGKEIT" },
  {
    n: 21, h: 18, label: "Konsistenz",
    text: ["Verwenden Sie nur reale, konsistente Werte. Immobilienwerte nur anpassen,", "wenn eine neue Bewertung vorliegt."],
  },
  { n: 22, h: 17, label: "Währung", text: ["Alle Beträge in Euro (€). Keine Fremdwährungen mischen, ohne Umrechnung."] },
  {
    n: 23, h: 18, label: "Nettovermögen",
    text: ["Nettovermögen = Gesamtvermögen – Gesamtschulden. Ein positiver Wert", "bedeutet, Sie besitzen mehr als Sie schulden."],
  },
  {
    n: 24, h: 18, label: "Veränderung %",
    text: ["Die prozentuale Veränderung zeigt, um wie viel Prozent sich Ihr Nettovermögen", "gegenüber dem Vormonat verändert hat."],
  },
  {
    n: 25, h: 18, label: "Farben",
    text: ["Grüne Felder = Eingabe erwünscht, Türkis/Teal = berechnete Felder oder", "Überschriften, Rot = negativer Wert."],
  },
  { n: 26, h: 18 },
  { n: 27, h: 18, section: "BERECHNUNGSLOGIK" },
  { n: 28, h: 18, label: "Gesamtvermögen", text: ["Err:509"] },
  { n: 29, h: 18, label: "Gesamtschulden", text: [] },
];

/* ---------- pieces ---------- */

function Spelled({ children }: { children: string }) {
  return (
    <>
      {children.split(/([\s/,:()']+)/).map((word, i) => {
        const accepted = i % 2 === 1 || !/\p{L}{2}/u.test(word) || known.has(word.toLowerCase().replace(/\.$/, ""));
        return accepted ? <Fragment key={i}>{word}</Fragment> : <Misspelt key={i}>{word}</Misspelt>;
      })}
    </>
  );
}

function Tools({ spec }: { spec: string }) {
  return (
    <>
      {spec.split(" ").map((item, i) => {
        if (item === "|") return <Divider key={i} />;
        if (item === "v" || item === "w")
          return (
            <DropButton key={i} aria-label="More options">
              <Caret faded={item === "w"} />
            </DropButton>
          );
        const name = item.replace("*", "");
        return (
          <ToolButton key={i} aria-label={name} $active={item.endsWith("*")}>
            <Icon name={name} />
          </ToolButton>
        );
      })}
    </>
  );
}

function ComboBox({ label, value, width, italic }: { label: string; value: string; width: number; italic?: boolean }) {
  return (
    <Combo $width={width}>
      <ComboInput aria-label={label} defaultValue={value} $italic={italic} />
      <ComboButton aria-label={`${label} list`}>
        <Caret large />
      </ComboButton>
    </Combo>
  );
}

function SheetLine({ row }: { row: SheetRow }) {
  const tinted = row.n % 2 === 1;
  return (
    <Row $height={row.h}>
      <RowHead scope="row">{row.n}</RowHead>
      <Blank />
      {row.section && (
        <>
          <SectionCell><Spelled>{row.section}</Spelled></SectionCell>
          <SectionCell />
        </>
      )}
      {row.label && (
        <>
          <DataCell $tinted={tinted} $strong><Spelled>{row.label}</Spelled></DataCell>
          <DataCell $tinted={tinted}>
            <CellText $height={row.h}>
              {row.text?.map((line) => (
                <div key={line}><Spelled>{line}</Spelled></div>
              ))}
            </CellText>
          </DataCell>
        </>
      )}
      {!row.section && !row.label && <Blank colSpan={2} />}
      <Blank colSpan={15} />
    </Row>
  );
}

const letters = "ABCDEFGHIJKLMNOPQR".split("");
const widths: Record<string, number> = { A: 29, B: 142, C: 287, D: 95 };

export default function App() {
  return (
    <Window>
      <Global />
      <MenuBar>
        {menus.map((m) => <MenuItem key={m}>{m}</MenuItem>)}
        <CloseButton aria-label="Close document">
          <svg width={6} height={6} viewBox="0 0 6 6"><path d="M.5.5l5 5M5.500.5l-5 5" stroke="#222" strokeWidth={1.8} /></svg>
        </CloseButton>
      </MenuBar>
      <Toolbar><Tools spec={standard} /></Toolbar>
      <Toolbar $inset={3}>
        <ComboBox label="Font name" value="Calibri" width={137} italic />
        <ComboBox label="Font size" value="11 pt" width={67} />
        <Tools spec={formatting} />
      </Toolbar>
      <Work>
        <Editor>
          <FormulaBar>
            <ComboBox label="Name box" value="A1" width={107} />
            <Divider />
            <FormulaIcon aria-label="Function wizard" $width={18}><Icon name="fx" size={14} /></FormulaIcon>
            <FormulaIcon aria-label="Select function" $width={14}><Icon name="sum" size={13} /></FormulaIcon>
            <DropButton aria-label="More functions"><Caret /></DropButton>
            <FormulaIcon aria-label="Formula" $width={18}><Icon name="equals" /></FormulaIcon>
            <FormulaInput aria-label="Input line" />
            <DropButton aria-label="Expand formula bar"><Caret large /></DropButton>
          </FormulaBar>
          <SheetArea>
            <Viewport>
              <Grid>
                <colgroup>
                  <Col $width={22} />
                  {letters.map((l) => <Col key={l} $width={widths[l]} />)}
                </colgroup>
                <thead>
                  <tr>
                    <Corner />
                    {letters.map((l) => <ColumnHead key={l} scope="col" $selected={l === "A"}>{l}</ColumnHead>)}
                  </tr>
                </thead>
                <tbody>
                  <Row $height={33}>
                    <RowHead scope="row" $selected>1</RowHead>
                    <ActiveCell />
                    <TitleCell colSpan={3}><Spelled>Anleitung – Nettovermögen Entwicklung berechnen</Spelled></TitleCell>
                    <Blank colSpan={14} />
                  </Row>
                  {rows.map((row) => <SheetLine key={row.n} row={row} />)}
                </tbody>
              </Grid>
            </Viewport>
            <VScroll><VSplit /><VThumb /></VScroll>
          </SheetArea>
          <HScroll><HThumb /><HSplit /></HScroll>
          <TabBar>
            <TabNav aria-label="First sheet">
              <svg width={15} height={12} viewBox="0 0 15 12" fill="none" stroke="#c9c9c7"><path d="M1.5 0v12M10 1L4 6l6 5M10 4v4M12 6h3" /></svg>
            </TabNav>
            <TabNav aria-label="Previous sheet">
              <svg width={15} height={12} viewBox="0 0 15 12" fill="none" stroke="#c9c9c7"><path d="M1.5 2.500v7M8 3L4 6l4 3zM14 3l-4 3 4 3z" /></svg>
            </TabNav>
            <TabNav aria-label="Next sheet">
              <svg width={15} height={12} viewBox="0 0 15 12" fill="none" stroke="#c9c9c7"><path d="M1 3l4 3-4 3zM7 3l4 3-4 3zM13.500 2.500v7" /></svg>
            </TabNav>
            <TabNav aria-label="Last sheet">
              <svg width={15} height={12} viewBox="0 0 15 12" fill="none" stroke="#c9c9c7"><path d="M0 6h3M5 1l6 5-6 5M5 4v4M13.500 0v12" /></svg>
            </TabNav>
            <AddTab aria-label="Add sheet">
              <svg width={13} height={14} viewBox="0 0 13 14"><path d="M.5 13.500V.5h8l4 3" fill="none" stroke="#ddd" /><circle cx={10} cy={7} r={2.5} fill="#3b6fb6" /><path d="M8.5 7h3M10 5.500v3" stroke="#fff" /></svg>
            </AddTab>
            <Tab>Nettovermögen</Tab>
            <Tab>Dashboard</Tab>
            <Tab $active>Anleitung</Tab>
          </TabBar>
        </Editor>
        <Sidebar>
          {["menu", "properties", "styles", "gallery", "navigator", "fx"].map((n) => (
            <SideButton key={n} aria-label={n}><Icon name={n} /></SideButton>
          ))}
          <SidebarHandle aria-label="Hide sidebar">
            <svg width={4} height={6} viewBox="0 0 4 6"><path d="M0 0l4 3-4 3z" fill="#fff" /></svg>
          </SidebarHandle>
        </Sidebar>
      </Work>
      <StatusBar>
        <Status $width={176} $align="flex-start">
          <svg width={23} height={12} viewBox="-4 1 23 14" fill="none">{icons.disk}</svg>
          Sheet 3 of 3
        </Status>
        <Status $width={220} />
        <Status $grow={86}>PageStyle_Anleitung</Status>
        <Status $grow={126} />
        <Status $grow={167}>English (USA)</Status>
        <Status $width={44} />
        <Status $width={31}>
          <svg width={18} height={12} viewBox="0 0 18 12" fill="none"><path d="M.5 3.500h11v6H.500z" stroke="#4a9fce" /><path d="M14.5 1h4M16.500 1v10M14.500 11h4" stroke={K} /></svg>
        </Status>
        <Status $width={20} />
        <Status $width={20} />
        <Status $width={180}>Average: ; Sum: 0</Status>
        <Status $width={96}>
          <svg width={7} height={7} viewBox="0 0 7 7"><path d="M0 3.500h7" stroke="#222" strokeWidth={1.5} /></svg>
          <Zoom type="range" aria-label="Zoom" defaultValue={50} />
          <svg width={7} height={7} viewBox="0 0 7 7"><path d="M0 3.500h7M3.500 0v7" stroke="#222" strokeWidth={1.5} /></svg>
        </Status>
        <ZoomValue>100%</ZoomValue>
      </StatusBar>
    </Window>
  );
}
